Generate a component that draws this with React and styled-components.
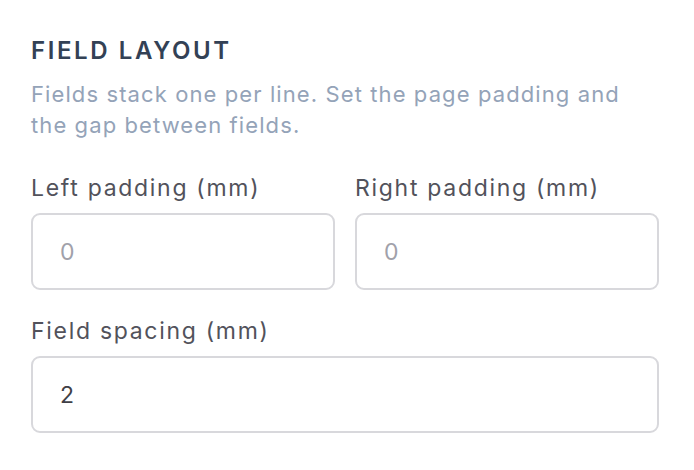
import styled, { createGlobalStyle } from "styled-components";

const GlobalStyle = createGlobalStyle`
  body {
    margin: 0;
    background: #ffffff;
    font-family: Inter, "Noto Sans", sans-serif;
  }
`;

const Panel = styled.div`
  padding: 38px 35px 0 31px;
`;

const Heading = styled.h2`
  margin: 0;
  font-size: 24px;
  line-height: 26px;
  font-weight: 600;
  letter-spacing: 2.6px;
  text-transform: uppercase;
  color: #334155;
`;

const Description = styled.p`
  margin: 15px 0 0;
  font-size: 22px;
  line-height: 31px;
  letter-spacing: 1.1px;
  color: #94a3b8;
`;

const Fields = styled.div`
  display: grid;
  grid-template-columns: ${(p) => (p.$cols === 2 ? "1fr 1fr" : "1fr")};
  column-gap: 20px;
  margin-top: ${(p) => p.$top}px;
`;

const Field = styled.label`
  display: flex;
  flex-direction: column;
  gap: 11px;
`;

const Label = styled.span`
  font-size: 23px;
  line-height: 28px;
  letter-spacing: 1.7px;
  color: #52525b;
`;

const Input = styled.input`
  box-sizing: border-box;
  width: 100%;
  height: 77px;
  padding: 0 27px;
  border: 2px solid #d8d8dc;
  border-radius: 9px;
  background: #ffffff;
  font-family: inherit;
  font-size: 23px;
  letter-spacing: 1px;
  color: #3f3f46;
  outline: none;

  &::placeholder {
    color: #a1a1aa;
  }
`;

function App() {
  return (
    <>
      <GlobalStyle />
      <Panel>
        <Heading>Field layout</Heading>
        <Description>
          Fields stack one per line. Set the page padding and the gap between
          fields.
        </Description>
        <Fields $cols={2} $top={33}>
          <Field>
            <Label>Left padding (mm)</Label>
            <Input type="text" placeholder="0" />
          </Field>
          <Field>
            <Label>Right padding (mm)</Label>
            <Input type="text" placeholder="0" />
          </Field>
        </Fields>
        <Fields $cols={1} $top={27}>
          <Field>
            <Label>Field spacing (mm)</Label>
            <Input type="text" defaultValue="2" />
          </Field>
        </Fields>
      </Panel>
    </>
  );
}

export default App;
